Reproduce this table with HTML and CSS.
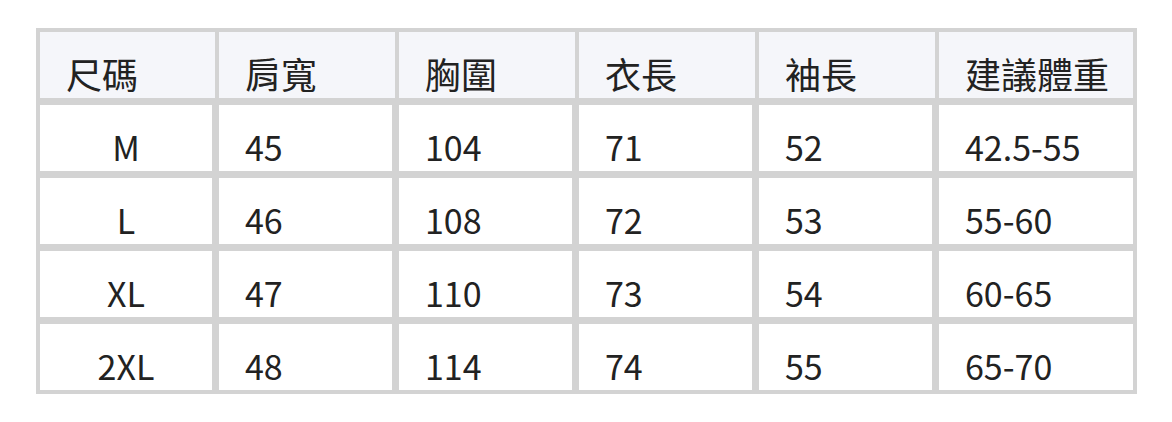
FILE: index.html
```html
<!DOCTYPE html>
<html lang="zh-Hant">
<head>
<meta charset="utf-8">
<title>尺碼表</title>
<link rel="stylesheet" href="styles.css">
</head>
<body>
<div class="page">
  <div class="size-table">
    <div class="cell head">尺碼</div>
    <div class="cell head">肩寬</div>
    <div class="cell head">胸圍</div>
    <div class="cell head">衣長</div>
    <div class="cell head">袖長</div>
    <div class="cell head">建議體重</div>

    <div class="cell body size">M</div>
    <div class="cell body">45</div>
    <div class="cell body">104</div>
    <div class="cell body">71</div>
    <div class="cell body">52</div>
    <div class="cell body last">42.5-55</div>

    <div class="cell body size">L</div>
    <div class="cell body">46</div>
    <div class="cell body">108</div>
    <div class="cell body">72</div>
    <div class="cell body">53</div>
    <div class="cell body last">55-60</div>

    <div class="cell body size">XL</div>
    <div class="cell body">47</div>
    <div class="cell body">110</div>
    <div class="cell body">73</div>
    <div class="cell body">54</div>
    <div class="cell body last">60-65</div>

    <div class="cell body size">2XL</div>
    <div class="cell body">48</div>
    <div class="cell body">114</div>
    <div class="cell body">74</div>
    <div class="cell body">55</div>
    <div class="cell body last">65-70</div>
  </div>
</div>
</body>
</html>
```

FILE: styles.css
```css
* { box-sizing: border-box; }
html, body { margin: 0; padding: 0; background: #ffffff; }
body {
  font-family: "Noto Sans CJK TC", "Noto Sans", sans-serif;
  color: #222222;
}
.page {
  padding: 28px 36px;
}
.size-table {
  display: grid;
  grid-template-columns: 175px 176px 176px 176px 176px 194px;
  grid-template-rows: 66px 69px 69px 69px 69px;
  gap: 4px;
  padding: 4px;
  width: 1101px;
  background: #d3d3d3;
}
.cell {
  line-height: 36px;
  white-space: nowrap;
}
.head {
  font-size: 36px;
  padding: 23px 0 7px 26px;
  background: #f5f6fa;
}
.body {
  font-size: 34px;
  padding: 24px 0 6px 26px;
  background: #ffffff;
  border-top: 3px solid #d3d3d3;
  border-right: 3px solid #d3d3d3;
}
.body.last {
  border-right: none;
}
.body.size {
  padding-left: 0;
  text-align: center;
}
```
